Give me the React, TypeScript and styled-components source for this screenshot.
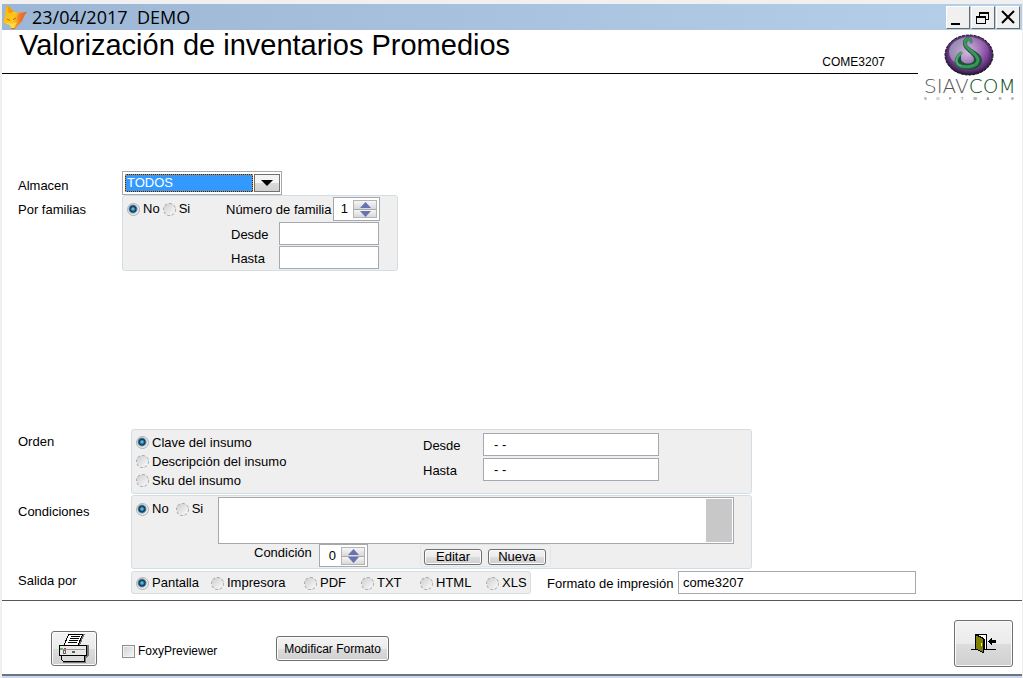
import React from "react";
import styled, { createGlobalStyle, css } from "styled-components";

const GlobalStyle = createGlobalStyle`
  *, *::before, *::after { box-sizing: border-box; }
  body {
    margin: 0;
    background: #fff;
    color: #000;
    font-family: "Liberation Sans", Arial, sans-serif;
    font-size: 13px;
    line-height: 16px;
  }
  input, select, textarea, button { font: inherit; color: inherit; margin: 0; }
`;

const Window = styled.div`
  display: flex;
  flex-direction: column;
  min-height: 100vh;
  border: solid #f0f0f0;
  border-width: 4px 1px 0 2px;
`;

const TitleBar = styled.header`
  display: flex;
  align-items: center;
  height: 26px;
  padding: 0 2px 0 0;
  background: linear-gradient(90deg, #9cb6d5, #a9c2df 50%, #b6cfe9);
`;

const WindowTitle = styled.span`
  flex: 1;
  margin-left: 3px;
  font-family: "Open Sans", "Noto Sans", sans-serif;
  font-size: 18px;
  line-height: 24px;
  white-space: pre;
`;

const WindowButtons = styled.div`
  display: flex;
  gap: 1px;
`;

const WindowButton = styled.button`
  width: 24px;
  height: 23px;
  padding: 0;
  border: 1px solid;
  border-color: #fff #696969 #696969 #fff;
  background: #f0f0f0;
  svg { display: block; }
`;

const Heading = styled.div`
  display: flex;
  align-items: flex-start;
  height: 72px;
`;

const HeadingRule = styled.div`
  flex: 1;
  display: flex;
  justify-content: space-between;
  height: 44px;
  padding: 0 33px 0 17px;
  border-bottom: 1px solid #000;
`;

const Title = styled.h1`
  margin: 0;
  font-size: 29px;
  font-weight: 400;
  line-height: 30px;
`;

const FormCode = styled.span`
  padding-top: 24px;
  font-size: 12px;
`;

const Logo = styled.div`
  width: 104px;
  padding: 2px 8px 0 6px;
  svg { display: block; margin: 0 auto; }
`;

const LogoName = styled.div`
  font-family: "DejaVu Sans", sans-serif;
  font-weight: 200;
  font-size: 20px;
  line-height: 21px;
  color: #555;
  white-space: nowrap;
  span { color: #0b4d22; }
`;

const LogoTag = styled.div`
  display: flex;
  justify-content: space-between;
  font-size: 4px;
  line-height: 4px;
  color: #555;
`;

const Form = styled.form`
  flex: 1;
  display: flex;
  flex-direction: column;
`;

const Body = styled.div`
  flex: 1;
  display: flex;
  flex-direction: column;
  justify-content: space-between;
  gap: 24px;
  padding: 69px 0 6px 16px;
  border-bottom: 1px solid #555;
`;

const Section = styled.div<{ $label: number }>`
  display: grid;
  grid-template-columns: ${(p) => p.$label}px 1fr;
  justify-items: start;
`;

const rowLabel = css<{ $top?: number }>`
  padding-top: ${(p) => p.$top ?? 0}px;
`;
const RowLabel = styled.label`${rowLabel}`;
const RowCaption = styled.span`${rowLabel}`;

const panel = css`
  border: 1px solid #d3dde4;
  border-radius: 3px;
  background: #efefef;
`;

const FamilyPanel = styled.div`
  ${panel}
  display: flex;
  width: 276px;
  height: 76px;
  padding: 1px 0 0 4px;
`;

const OrderPanel = styled.div`
  ${panel}
  display: flex;
  width: 621px;
  height: 65px;
  padding: 3px 0 0 4px;
`;

const ConditionPanel = styled.div`
  ${panel}
  display: flex;
  width: 621px;
  height: 74px;
  margin: 1px 0 2px;
  padding: 1px 0 0 4px;
`;

const OutputRow = styled.div`
  display: flex;
  align-items: flex-start;
`;

const OutputPanel = styled.div`
  ${panel}
  display: grid;
  grid-template-columns: 75px 93px 57px 59px 66px 1fr;
  align-items: center;
  width: 400px;
  height: 23px;
  margin-right: 16px;
  padding: 1px 0 0 4px;
`;

const RadioRow = styled.div<{ $width: number; $gap: number }>`
  display: flex;
  align-items: center;
  align-self: flex-start;
  gap: ${(p) => p.$gap}px;
  width: ${(p) => p.$width}px;
  height: 24px;
`;

const RadioColumn = styled.div`
  width: 287px;
`;

const Choice = styled.label`
  display: flex;
  align-items: center;
  gap: 3px;
  height: 19px;
  white-space: nowrap;
`;

const RadioInput = styled.input`
  appearance: none;
  flex: none;
  width: 13px;
  height: 13px;
  border: 1px dashed #a4a4a4;
  border-radius: 50%;
  background: linear-gradient(135deg, #cfcfcf, #fafafa);
  &:checked {
    border: 1px solid #a9b3ba;
    background: radial-gradient(circle at 5px 5px, #8fdcf5 0, #1d6f9c 2px, #0c3350 3px, #e6eef2 5px);
  }
`;

const Fields = styled.div`
  display: flex;
  flex-direction: column;
  gap: 1px;
`;

const FieldRow = styled.div<{ $indent?: number }>`
  display: flex;
  align-items: center;
  padding-left: ${(p) => p.$indent ?? 0}px;
`;

const FieldLabel = styled.label<{ $width: number }>`
  flex: none;
  width: ${(p) => p.$width}px;
  padding-top: 2px;
  white-space: nowrap;
`;

const TextInput = styled.input<{ $width: number; $pad?: number }>`
  width: ${(p) => p.$width}px;
  height: 23px;
  padding: 0 ${(p) => p.$pad ?? 4}px;
  border: 1px solid #a5a8ae;
  background: #fff;
`;

const DateFields = styled(Fields)`
  gap: 2px;
`;

const ComboFrame = styled.div`
  display: flex;
  gap: 1px;
  width: 160px;
  height: 24px;
  padding: 2px 1px;
  border: 1px solid #a5a8ae;
  background: #fff;
`;

const ComboSelect = styled.select`
  appearance: none;
  flex: 1;
  margin-left: 1px;
  padding: 0 1px;
  border: 1px solid #1d2b3a;
  outline: 1px dotted #e0862a;
  outline-offset: -1px;
  border-radius: 0;
  background: #3399ff;
  color: #fff;
  line-height: 14px;
`;

const ComboArrow = styled.span`
  display: grid;
  place-items: center;
  width: 26px;
  border: 1px solid #707070;
  background: linear-gradient(#f4f4f4 50%, #dadada 50%, #d0d0d0);
`;

const SpinFrame = styled.div<{ $width: number; $height: number }>`
  display: flex;
  align-items: center;
  width: ${(p) => p.$width}px;
  height: ${(p) => p.$height}px;
  padding-right: 2px;
  border: 1px solid #a5a8ae;
  background: #fff;
`;

const SpinInput = styled.input`
  flex: 1;
  min-width: 0;
  padding: 0 5px 0 0;
  border: 0;
  background: none;
  text-align: right;
`;

const SpinButtons = styled.div`
  display: flex;
  flex-direction: column;
  width: 24px;
  border: 1px solid #b4b4b4;
`;

const SpinButton = styled.button`
  display: grid;
  place-items: center;
  height: 8px;
  padding: 0;
  border: 0;
  background: linear-gradient(#f6f6f6, #d8d8d8);
  & + & { border-top: 1px solid #a8a8a8; }
`;

const ConditionBody = styled.div`
  width: 516px;
`;

const MemoFrame = styled.div`
  display: flex;
  height: 47px;
  padding: 1px;
  border: 1px solid #a5a8ae;
  background: #fff;
`;

const Memo = styled.textarea`
  flex: 1;
  padding: 2px;
  border: 0;
  resize: none;
  background: none;
`;

const MemoTrack = styled.div`
  width: 26px;
  background: #c8c8c8;
`;

const ConditionTools = styled.div`
  display: flex;
  align-items: flex-start;
  padding-left: 36px;
`;

const ConditionLabel = styled.label`
  width: 65px;
  padding-top: 1px;
`;

const ButtonGroup = styled.div`
  display: flex;
  align-items: flex-end;
  gap: 6px;
  height: 23px;
  margin-left: 52px;
  padding: 0 4px 1px 3px;
  border: 1px solid #dfe6ea;
  border-radius: 3px;
`;

const PushButton = styled.button<{ $width: number; $height: number; $size?: number }>`
  display: flex;
  align-items: center;
  justify-content: center;
  width: ${(p) => p.$width}px;
  height: ${(p) => p.$height}px;
  padding: 0;
  border: 1px solid #707070;
  border-radius: 3px;
  background: linear-gradient(#f3f3f3, #ebebeb 50%, #dddddd 50%, #cfcfcf);
  box-shadow: inset 0 0 0 1px #fbfbfb;
  font-size: ${(p) => p.$size ?? 13}px;
  line-height: 12px;
  white-space: nowrap;
`;

const Footer = styled.footer`
  display: flex;
  align-items: flex-end;
  justify-content: space-between;
  padding: 19px 9px 7px 49px;
`;

const FooterTools = styled.div`
  display: flex;
  align-items: center;
  padding-bottom: 1px;
`;

const CheckLabel = styled.label`
  display: flex;
  align-items: center;
  gap: 3px;
  width: 154px;
  margin-left: 25px;
  padding-top: 5px;
  font-size: 12px;
`;

const CheckBox = styled.input`
  appearance: none;
  width: 13px;
  height: 13px;
  border: 1px solid #8e8f8f;
  background: linear-gradient(135deg, #cdd0d3, #f8f8f8);
  box-shadow: inset 0 0 0 1px #f4f4f4;
  &:checked { background: #1d6f9c; }
`;

const BottomEdge = styled.div`
  height: 4px;
  border-top: 2px solid #6d7680;
  background: #c9d9ec;
`;

function Radio(props: { name: string; label: string; on?: boolean }) {
  return (
    <Choice>
      <RadioInput type="radio" name={props.name} defaultChecked={props.on} />
      {props.label}
    </Choice>
  );
}

function Spinner(props: { id: string; value: string; width: number; height: number }) {
  const [value, setValue] = React.useState(Number(props.value));
  return (
    <SpinFrame $width={props.width} $height={props.height}>
      <SpinInput
        id={props.id}
        inputMode="numeric"
        value={value}
        onChange={(e) => setValue(Number(e.target.value) || 0)}
      />
      <SpinButtons>
        <SpinButton type="button" aria-label="Aumentar" onClick={() => setValue(value + 1)}>
          <svg width="11" height="6" viewBox="0 0 11 6"><path d="M0 6L5.500 0L11 6Z" fill="#6572b5" /></svg>
        </SpinButton>
        <SpinButton type="button" aria-label="Disminuir" onClick={() => setValue(value - 1)}>
          <svg width="11" height="6" viewBox="0 0 11 6"><path d="M0 0L5.500 6L11 0Z" fill="#6572b5" /></svg>
        </SpinButton>
      </SpinButtons>
    </SpinFrame>
  );
}

function FoxIcon() {
  return (
    <svg width="27" height="26" viewBox="0 0 27 26">
      <defs>
        <linearGradient id="fox" x1="0" y1="0" x2="1" y2="0.300">
          <stop offset="0" stopColor="#ffb400" />
          <stop offset="0.550" stopColor="#ffc81e" />
          <stop offset="1" stopColor="#e8502a" />
        </linearGradient>
      </defs>
      <path d="M5 1L12 7.500L17 9L25 8L22.500 11L20 17L15.500 22L13 25L9 24L8.500 21.500L1 18.500L3 13L3.500 6Z" fill="url(#fox)" />
      <path d="M5 1L12 7.500L7 9.500Z" fill="#f59a10" />
      <path d="M25 8L17 9L15 14L19 18L22.500 11Z" fill="#ee6a28" opacity="0.500" />
      <path d="M2 18L9 20L15 18L12 24L9 24L8.500 21.500Z" fill="#ffdc48" />
      <path d="M5 15L8 16.500M11 15.500L14 14" stroke="#a8700f" fill="none" />
      <path d="M9 24.500L13 24.500" stroke="#d87808" />
    </svg>
  );
}

function SphereLogo() {
  return (
    <svg width="50" height="44" viewBox="0 0 50 44">
      <defs>
        <radialGradient id="orb" cx="0.500" cy="0.450" r="0.560">
          <stop offset="0" stopColor="#cdb8dc" />
          <stop offset="0.450" stopColor="#9a68b4" />
          <stop offset="0.800" stopColor="#5d3078" />
          <stop offset="1" stopColor="#1c1026" />
        </radialGradient>
        <linearGradient id="shine" x1="0" y1="0" x2="1" y2="0.600">
          <stop offset="0" stopColor="#8fb4b0" stopOpacity="0.800" />
          <stop offset="0.500" stopColor="#ddd0e8" stopOpacity="0.350" />
          <stop offset="1" stopColor="#8a3aa8" stopOpacity="0.500" />
        </linearGradient>
      </defs>
      <ellipse cx="25" cy="23" rx="24" ry="20" fill="url(#orb)" stroke="#18101e" strokeDasharray="3 1" />
      <ellipse cx="25" cy="20" rx="20" ry="15" fill="url(#shine)" />
      <path d="M17 20C10 24 8 32 15 36C23 40 36 38 38 30C40 20 22 17 23 11C24 7 27 8 28 11C30 4 20 3 19 10C18 19 31 22 30 28C28 34 16 32 17 26Z" fill="#1c5534" />
      <path d="M17 21C11 26 11 32 17 34C24 36 34 34 34 28C34 21 20 17 21 10C22 6 27 6 27 10" fill="none" stroke="#3b9460" strokeWidth="3" strokeLinecap="round" />
      <path d="M17 21C11 26 11 32 17 34" fill="none" stroke="#5fb481" strokeWidth="1" strokeLinecap="round" />
    </svg>
  );
}

function PrinterIcon() {
  return (
    <svg width="32" height="31" viewBox="0 0 32 31" shapeRendering="crispEdges">
      <path d="M27 12L31 12L31 22L28 25L28 30L5 30L5 28L27 28Z" fill="#777" />
      <path d="M24 1L27 1L22 12L18 12Z" fill="#777" />
      <path d="M11 1L25 1L20 12L6 12Z" fill="#fff" stroke="#000" />
      <path d="M13 3.500H22M12 5.500H21M11 7.500H20M10 9.500H19" stroke="#000" />
      <path d="M1 12.500H28V22.500H1Z" fill="#e8e8e8" stroke="#000" />
      <path d="M2 16.500H27" stroke="#999" />
      <path d="M2 15.500H5" stroke="#3c3" />
      <path d="M6 15.500H8" stroke="#e22" />
      <path d="M5.500 17.500H7.500V20.500H5.500Z" fill="none" stroke="#666" />
      <path d="M14 18H17V20H14Z" fill="#4b6b4b" />
      <path d="M3.500 22.500H26.500V28.500H5.500L3.500 26.500Z" fill="#ddd" stroke="#000" />
    </svg>
  );
}

function DoorIcon() {
  return (
    <svg width="26" height="21" viewBox="0 0 26 21" shapeRendering="crispEdges">
      <path d="M0 16.500H5M12 16.500H25" stroke="#000" />
      <path d="M4.500 1.500H15.500V16.500H13V6Z" fill="#fff" stroke="#000" />
      <path d="M4.500 1.500L12.500 5.500V19.500L4.500 16Z" fill="#808000" stroke="#000" />
      <path d="M10 10H11V13H10Z" fill="#ff0" />
      <path d="M17 8.500L21 4.500V7H25V10H21V12.500Z" fill="#000" />
    </svg>
  );
}

export default function App() {
  return (
    <Window>
      <GlobalStyle />
      <TitleBar>
        <FoxIcon />
        <WindowTitle>{"23/04/2017  DEMO"}</WindowTitle>
        <WindowButtons>
          <WindowButton type="button" aria-label="Minimizar">
            <svg width="22" height="21" viewBox="0 0 22 21"><path d="M4 16H13V18H4Z" /></svg>
          </WindowButton>
          <WindowButton type="button" aria-label="Restaurar">
            <svg width="22" height="21" viewBox="0 0 22 21" fill="none" stroke="#000" shapeRendering="crispEdges">
              <path d="M7.500 9V5.500H16.500V12.500H13" />
              <path d="M7 6H17" strokeWidth="2" />
              <path d="M4.500 9.500H13.500V16.500H4.500Z" />
              <path d="M4 10H14" strokeWidth="2" />
            </svg>
          </WindowButton>
          <WindowButton type="button" aria-label="Cerrar">
            <svg width="22" height="21" viewBox="0 0 22 21"><path d="M5 4L17 16M17 4L5 16" stroke="#000" strokeWidth="2" /></svg>
          </WindowButton>
        </WindowButtons>
      </TitleBar>

      <Heading>
        <HeadingRule>
          <Title>Valorización de inventarios Promedios</Title>
          <FormCode>COME3207</FormCode>
        </HeadingRule>
        <Logo>
          <SphereLogo />
          <LogoName>SIAV<span>COM</span></LogoName>
          <LogoTag>{"SOFTWARE".split("").map((c, i) => <span key={i}>{c}</span>)}</LogoTag>
        </Logo>
      </Heading>

      <Form onSubmit={(e) => e.preventDefault()}>
        <Body>
          <Section $label={104}>
            <RowLabel htmlFor="almacen" $top={7}>Almacen</RowLabel>
            <ComboFrame>
              <ComboSelect id="almacen"><option>TODOS</option></ComboSelect>
              <ComboArrow>
                <svg width="12" height="6" viewBox="0 0 12 6"><path d="M0 0H12L6 6Z" /></svg>
              </ComboArrow>
            </ComboFrame>
            <RowCaption $top={7}>Por familias</RowCaption>
            <FamilyPanel role="radiogroup" aria-label="Por familias">
              <RadioRow $width={99} $gap={3}>
                <Radio name="familias" label="No" on />
                <Radio name="familias" label="Si" />
              </RadioRow>
              <Fields>
                <FieldRow>
                  <FieldLabel htmlFor="numero" $width={107}>Número de familia</FieldLabel>
                  <Spinner id="numero" value="1" width={47} height={24} />
                </FieldRow>
                <FieldRow $indent={5}>
                  <FieldLabel htmlFor="fam-desde" $width={48}>Desde</FieldLabel>
                  <TextInput id="fam-desde" $width={100} />
                </FieldRow>
                <FieldRow $indent={5}>
                  <FieldLabel htmlFor="fam-hasta" $width={48}>Hasta</FieldLabel>
                  <TextInput id="fam-hasta" $width={100} />
                </FieldRow>
              </Fields>
            </FamilyPanel>
          </Section>

          <Section $label={113}>
            <RowCaption $top={5}>Orden</RowCaption>
            <OrderPanel>
              <RadioColumn role="radiogroup" aria-label="Orden">
                <Radio name="orden" label="Clave del insumo" on />
                <Radio name="orden" label="Descripción del insumo" />
                <Radio name="orden" label="Sku del insumo" />
              </RadioColumn>
              <DateFields>
                <FieldRow>
                  <FieldLabel htmlFor="ord-desde" $width={60}>Desde</FieldLabel>
                  <TextInput id="ord-desde" $width={176} $pad={10} defaultValue="- -" />
                </FieldRow>
                <FieldRow>
                  <FieldLabel htmlFor="ord-hasta" $width={60}>Hasta</FieldLabel>
                  <TextInput id="ord-hasta" $width={176} $pad={10} defaultValue="- -" />
                </FieldRow>
              </DateFields>
            </OrderPanel>

            <RowCaption $top={10}>Condiciones</RowCaption>
            <ConditionPanel>
              <RadioRow $width={82} $gap={7} role="radiogroup" aria-label="Condiciones">
                <Radio name="condiciones" label="No" on />
                <Radio name="condiciones" label="Si" />
              </RadioRow>
              <ConditionBody>
                <MemoFrame>
                  <Memo aria-label="Texto de la condición" />
                  <MemoTrack />
                </MemoFrame>
                <ConditionTools>
                  <ConditionLabel htmlFor="condicion">Condición</ConditionLabel>
                  <Spinner id="condicion" value="0" width={49} height={23} />
                  <ButtonGroup>
                    <PushButton type="button" $width={58} $height={16}>Editar</PushButton>
                    <PushButton type="button" $width={58} $height={16}>Nueva</PushButton>
                  </ButtonGroup>
                </ConditionTools>
              </ConditionBody>
            </ConditionPanel>

            <RowCaption $top={2}>Salida por</RowCaption>
            <OutputRow>
              <OutputPanel role="radiogroup" aria-label="Salida por">
                <Radio name="salida" label="Pantalla" on />
                <Radio name="salida" label="Impresora" />
                <Radio name="salida" label="PDF" />
                <Radio name="salida" label="TXT" />
                <Radio name="salida" label="HTML" />
                <Radio name="salida" label="XLS" />
              </OutputPanel>
              <FieldRow>
                <FieldLabel htmlFor="formato" $width={131}>Formato de impresión</FieldLabel>
                <TextInput id="formato" $width={238} defaultValue="come3207" />
              </FieldRow>
            </OutputRow>
          </Section>
        </Body>

        <Footer>
          <FooterTools>
            <PushButton type="button" aria-label="Imprimir" $width={46} $height={35}><PrinterIcon /></PushButton>
            <CheckLabel><CheckBox type="checkbox" />FoxyPreviewer</CheckLabel>
            <PushButton type="button" $width={113} $height={25} $size={12}>Modificar Formato</PushButton>
          </FooterTools>
          <PushButton type="button" aria-label="Salir" $width={59} $height={47}><DoorIcon /></PushButton>
        </Footer>
      </Form>
      <BottomEdge />
    </Window>
  );
}
